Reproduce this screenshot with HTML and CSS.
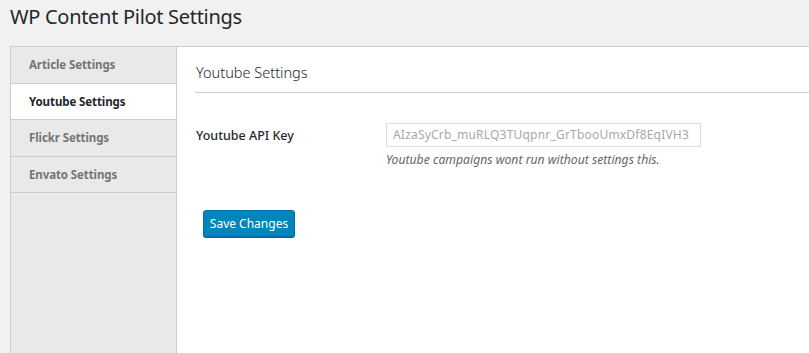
FILE: index.html
```html
<!DOCTYPE html>
<html lang="en">

<head>
    <meta charset="utf-8">
    <meta name="viewport" content="width=device-width, initial-scale=1.0">
    <title>WP Content Pilot Settings</title>
    <link rel="stylesheet" href="styles.css">
</head>

<body>
    <div class="wrap">
        <h1>WP Content Pilot Settings</h1>

        <div class="panel">
            <ul class="tabs">
                <li><a href="#article">Article Settings</a></li>
                <li class="active"><a href="#youtube">Youtube Settings</a></li>
                <li><a href="#flickr">Flickr Settings</a></li>
                <li><a href="#envato">Envato Settings</a></li>
            </ul>

            <section class="content">
                <h2>Youtube Settings</h2>
                <form>
                    <div class="row">
                        <label for="yt-key">Youtube API Key</label>
                        <div class="field">
                            <input id="yt-key" type="text" value="AIzaSyCrb_muRLQ3TUqpnr_GrTbooUmxDf8EqIVH3">
                            <p class="description">Youtube campaigns wont run without settings this.</p>
                        </div>
                    </div>
                    <button type="button" class="button-primary">Save Changes</button>
                </form>
            </section>
        </div>
    </div>
</body>

</html>
```

FILE: styles.css
```css
html,
body {
    height: 100%;
}

body {
    margin: 0;
    background-color: #f1f1f1;
    font-family: 'Noto Sans', 'Open Sans', sans-serif;
    color: #23282d;
    overflow: hidden;
}

.wrap {
    padding-left: 10px;
    height: 100%;
    display: flex;
    flex-direction: column;
}

h1 {
    margin: 0;
    padding: 3px 0 0 0;
    height: 43px;
    font-size: 20px;
    font-weight: 400;
    letter-spacing: -0.3px;
    line-height: 28px;
    color: #23282d;
}

.panel {
    flex: 1;
    display: flex;
    border-top: 1px solid #ccc;
    border-left: 1px solid #ccc;
    background-color: #fff;
}

.tabs {
    list-style: none;
    margin: 0;
    padding: 0;
    width: 165px;
    flex-shrink: 0;
    background-color: #e9e9e9;
    border-right: 1px solid #ccc;
}

.tabs li {
    border-bottom: 1px solid #ccc;
}

.tabs a {
    display: block;
    padding: 8px 0 8px 18px;
    line-height: 19.5px;
    font-size: 11.5px;
    font-weight: 700;
    letter-spacing: -0.1px;
    color: #757575;
    text-decoration: none;
}

.tabs .active {
    background-color: #fff;
}

.tabs .active a {
    color: #23282d;
}

.content {
    flex: 1;
    padding-left: 18px;
}

h2 {
    margin: 0;
    padding: 15px 0 0 1px;
    height: 30px;
    font-size: 14.5px;
    font-weight: 300;
    line-height: 20px;
    color: #23282d;
    border-bottom: 1px solid #ccc;
}

.row {
    display: flex;
    padding-top: 29px;
}

.row label {
    width: 190px;
    padding: 0 0 0 1px;
    line-height: 28px;
    font-size: 12.5px;
    font-weight: 500;
}

.field input {
    width: 315px;
    height: 24px;
    box-sizing: border-box;
    margin: 0;
    padding: 0 6px;
    border: 1px solid #ddd;
    font-family: 'Noto Sans', sans-serif;
    font-size: 12px;
    color: #a8a8a8;
    letter-spacing: 0.2px;
}

.description {
    margin: 3px 0 0 0;
    font-size: 12.2px;
    font-style: italic;
    color: #666;
    line-height: 20px;
}

.button-primary {
    margin: 40px 0 0 8px;
    width: 92px;
    height: 27px;
    padding: 0;
    background-color: #0085ba;
    border: 1px solid #0073aa;
    border-radius: 3px;
    box-shadow: 0 1px 0 #006799;
    color: #fff;
    font-family: 'Noto Sans', sans-serif;
    font-size: 12px;
}
```
